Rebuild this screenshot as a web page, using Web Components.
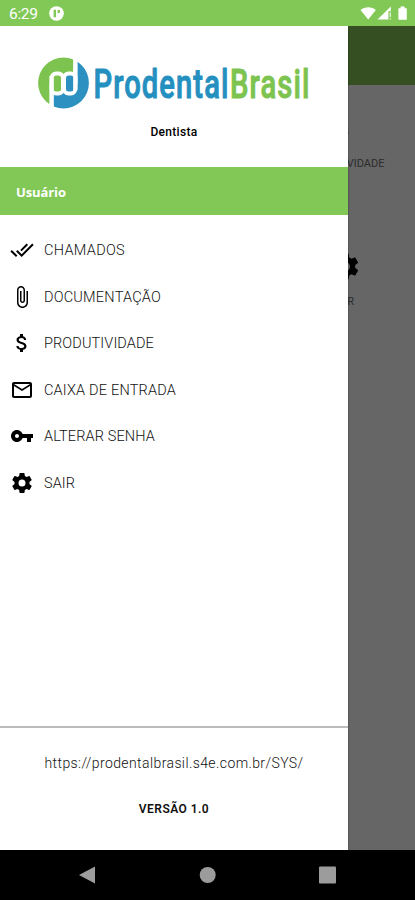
<!DOCTYPE html>
<html lang="pt-BR">
<head>
<meta charset="utf-8">
<title>Prodental Brasil</title>
<style>
  body {
    margin: 0;
    font-family: Roboto, "Liberation Sans", sans-serif;
  }
</style>
</head>
<body>
<app-screen>
  <status-bar slot="status"></status-bar>
  <home-page slot="page">
    <home-tile icon="money">PRODUTIVIDADE</home-tile>
    <home-tile icon="gear">SAIR</home-tile>
  </home-page>
  <side-drawer slot="drawer">
    <brand-logo slot="header"></brand-logo>
    <span slot="role">Dentista</span>
    <span slot="user">Usuário</span>
    <menu-item icon="checks" width="81">CHAMADOS</menu-item>
    <menu-item icon="clip" width="117">DOCUMENTAÇÃO</menu-item>
    <menu-item icon="money" width="110">PRODUTIVIDADE</menu-item>
    <menu-item icon="mail" width="132">CAIXA DE ENTRADA</menu-item>
    <menu-item icon="key" width="111">ALTERAR SENHA</menu-item>
    <menu-item icon="gear" width="31">SAIR</menu-item>
    <span slot="url">https://prodentalbrasil.s4e.com.br/SYS/</span>
    <span slot="version">VERSÃO 1.0</span>
  </side-drawer>
  <nav-bar slot="nav"></nav-bar>
</app-screen>

<script>
const icons = {
  checks: 'M.41 13.41 6 19l1.41-1.42L1.83 12M22.24 5.58 11.66 16.17 7.5 12l-1.43 1.41L11.66 19l12-12M18 7l-1.41-1.42-6.35 6.35 1.42 1.41L18 7z',
  clip: 'M16.5 6v11.5c0 2.21-1.79 4-4 4s-4-1.79-4-4V5c0-1.38 1.12-2.5 2.5-2.5s2.5 1.12 2.5 2.5v10.5c0 .55-.45 1-1 1s-1-.45-1-1V6H10v9.5c0 1.38 1.12 2.5 2.5 2.5s2.5-1.12 2.5-2.5V5c0-2.21-1.79-4-4-4S7 2.79 7 5v12.5c0 3.04 2.46 5.5 5.5 5.5s5.5-2.46 5.5-5.5V6h-1.5z',
  money: 'M11.8 10.9c-2.27-.59-3-1.2-3-2.15 0-1.09 1.01-1.85 2.7-1.85 1.78 0 2.44.85 2.5 2.1h2.21c-.07-1.72-1.12-3.3-3.21-3.81V3h-3v2.16c-1.94.42-3.5 1.68-3.5 3.61 0 2.31 1.91 3.46 4.7 4.13 2.5.6 3 1.48 3 2.41 0 .69-.49 1.79-2.7 1.79-2.06 0-2.87-.92-2.98-2.1h-2.2c.12 2.19 1.76 3.42 3.68 3.83V21h3v-2.15c1.95-.37 3.5-1.5 3.5-3.55 0-2.84-2.43-3.81-4.7-4.4z',
  mail: 'M20 4H4c-1.1 0-2 .9-2 2v12c0 1.1.9 2 2 2h16c1.1 0 2-.9 2-2V6c0-1.1-.9-2-2-2zm0 14H4V8l8 5 8-5v10zm-8-7L4 6h16l-8 5z',
  key: 'M12.65 10C11.83 7.67 9.61 6 7 6c-3.31 0-6 2.69-6 6s2.69 6 6 6c2.61 0 4.83-1.67 5.65-4H17v4h4v-4h2v-4H12.65zM7 14c-1.1 0-2-.9-2-2s.9-2 2-2 2 .9 2 2-.9 2-2 2z',
  gear: 'M12 15.5A3.5 3.5 0 0 1 8.5 12 3.5 3.5 0 0 1 12 8.5a3.5 3.5 0 0 1 3.5 3.5 3.5 3.5 0 0 1-3.5 3.5m7.43-2.53c.04-.32.07-.64.07-.97s-.03-.66-.07-1l2.11-1.63c.19-.15.24-.42.12-.64l-2-3.46c-.12-.22-.39-.31-.61-.22l-2.49 1c-.52-.39-1.06-.73-1.69-.98l-.37-2.65A.506.506 0 0 0 14 2h-4c-.25 0-.46.18-.5.42l-.37 2.65c-.63.25-1.17.59-1.69.98l-2.49-1c-.22-.09-.49 0-.61.22l-2 3.46c-.13.22-.07.49.12.64L4.57 11c-.04.34-.07.67-.07 1s.03.65.07.97l-2.11 1.66c-.19.15-.25.42-.12.64l2 3.46c.12.22.39.3.61.22l2.49-1.01c.52.4 1.06.74 1.69.99l.37 2.65c.04.24.25.42.5.42h4c.25 0 .46-.18.5-.42l.37-2.65c.63-.26 1.17-.59 1.69-.99l2.49 1.01c.22.08.49 0 .61-.22l2-3.46c.12-.22.07-.49-.12-.64l-2.11-1.66z'
};

function define(name, html, setup) {
  const template = document.createElement('template');
  template.innerHTML = html;

  window.customElements.define(name, class extends HTMLElement {
    constructor() {
      super();
      this.attachShadow({mode: 'open'});
      this.shadowRoot.appendChild(template.content.cloneNode(true));
    }

    connectedCallback() {
      if (setup) setup(this, this.shadowRoot);
    }
  });
}

define('app-screen', `
  <style>
    :host {
      display: flex;
      flex-direction: column;
      width: 415px;
      height: 900px;
      overflow: hidden;
    }
    main {
      flex: 1;
      display: flex;
      position: relative;
      overflow: hidden;
    }
    /* the drawer lies over the page */
    .over {
      position: absolute;
      top: 0;
      bottom: 0;
      left: 0;
      display: flex;
    }
  </style>
  <slot name="status"></slot>
  <main>
    <slot name="page"></slot>
    <div class="over"><slot name="drawer"></slot></div>
  </main>
  <slot name="nav"></slot>
`);

define('status-bar', `
  <style>
    :host {
      display: flex;
      align-items: center;
      box-sizing: border-box;
      height: 26px;
      padding: 2px 7px 0 9px;
      background: #82c856;
      color: #fff;
    }
    span {
      font-size: 15.5px;
      letter-spacing: -.3px;
      width: 40px;
    }
    .signs { margin-left: auto; }
    svg { display: block; }
  </style>
  <span>6:29</span>
  <svg width="16" height="16" viewBox="0 0 16 16">
    <circle cx="7.5" cy="7.5" r="7.3" fill="#fff"/>
    <path d="M4.6 3.8v7.4H7V3.800zM8.600 3.900H11v2.400L8.600 7.800z" fill="#82c856"/>
  </svg>
  <svg class="signs" width="48" height="16" viewBox="0 0 48 16">
    <path d="M.5 4C5 .3 11.500 .3 15.900 4L8.200 13.500z" fill="#fff"/>
    <path d="M17.500 13.500 30.800 .6V5.300h-2.400v8.200zM29.700 6.500h1.100v4.500h-1.100zM29.700 12.200h1.100v1.300h-1.100z" fill="#fff"/>
    <path d="M38.400 2.200h2.200V.6h4v1.600h2.200v11.600h-8.400z" fill="#fff"/>
  </svg>
`);

define('home-page', `
  <style>
    :host {
      display: flex;
      flex-direction: column;
      flex: 1;
      background: #666;
    }
    header {
      height: 59px;
      background: #354f22;
    }
    .tiles {
      display: flex;
      flex-direction: column;
      align-items: center;
      gap: 68px;
      width: 140px;
      margin: 28px 0 0 273px;
    }
  </style>
  <header></header>
  <div class="tiles"><slot></slot></div>
`);

define('home-tile', `
  <style>
    :host {
      display: flex;
      flex-direction: column;
      align-items: center;
      gap: 13px;
      height: 70px;
      font-size: 11px;
      line-height: 14px;
      color: #2c2c2c;
    }
    svg { width: 31px; height: 31px; fill: #000; }
    :host([icon="gear"]) { letter-spacing: -.7px; }
    :host([icon="gear"]) svg { margin-left: 4px; }
  </style>
  <svg viewBox="0 0 24 24"><path/></svg>
  <slot></slot>
`, (el, root) => {
  root.querySelector('path').setAttribute('d', icons[el.getAttribute('icon')]);
});

define('side-drawer', `
  <style>
    :host {
      display: flex;
      flex-direction: column;
      width: 348px;
      background: #fff;
      box-shadow: 0 0 2px rgba(0, 0, 0, .4);
    }
    header {
      display: flex;
      flex-direction: column;
      align-items: center;
      height: 141px;
    }
    .role {
      margin-top: 12px;
      font-size: 12px;
      line-height: 16px;
      letter-spacing: .3px;
      font-weight: 500;
    }
    .user {
      display: flex;
      align-items: center;
      box-sizing: border-box;
      height: 47.5px;
      padding: 2px 16px 0;
      background: #82c856;
      color: #fff;
      font: 700 13px "Open Sans", sans-serif;
      letter-spacing: -.1px;
    }
    nav {
      display: flex;
      flex-direction: column;
      flex: 1;
      padding-top: 12.5px;
    }
    footer {
      display: flex;
      flex-direction: column;
      align-items: center;
      box-sizing: border-box;
      height: 124px;
      border-top: 2px solid #bbb;
    }
    .url {
      margin-top: 25px;
      font-size: 14px;
      line-height: 20px;
      font-weight: 300;
      letter-spacing: .4px;
      color: #111;
    }
    .version {
      margin-top: 28px;
      font-size: 12px;
      line-height: 16px;
      font-weight: 600;
      letter-spacing: .45px;
      color: #111;
    }
  </style>
  <header>
    <slot name="header"></slot>
    <div class="role"><slot name="role"></slot></div>
  </header>
  <div class="user"><slot name="user"></slot></div>
  <nav><slot></slot></nav>
  <footer>
    <div class="url"><slot name="url"></slot></div>
    <div class="version"><slot name="version"></slot></div>
  </footer>
`);

define('brand-logo', `
  <style>
    :host { display: block; margin-top: 29px; }
    svg { display: block; overflow: visible; }
    text {
      font-family: Roboto, sans-serif;
      font-size: 41px;
      font-weight: 500;
      letter-spacing: 1.5px;
      stroke-width: 1px;
      stroke-linejoin: round;
    }
  </style>
  <svg width="276" height="57" viewBox="36 55 276 57">
    <clipPath id="disc"><circle cx="63.5" cy="83" r="25.4"/></clipPath>
    <g clip-path="url(#disc)">
      <path d="M36 56h37.300v28H49.600v26H36z" fill="#7dc350"/>
      <path d="M77.400 56H90v54H53.600V84h23.800z" fill="#2c91c1"/>
    </g>
    <rect x="51.6" y="73.6" width="11.4" height="19.8" rx="4.5" fill="#7dc350" stroke="#fff" stroke-width="4"/>
    <rect x="64" y="73.6" width="11.4" height="19.8" rx="4.5" fill="#2c91c1" stroke="#fff" stroke-width="4"/>
    <path d="M51.600 76v34M75.400 56v34" stroke="#fff" stroke-width="4"/>
    <text data-x="93.5" data-width="136" fill="#2490c0" stroke="#2490c0">Prodental</text>
    <text data-x="230" data-width="80.5" fill="#7dc350" stroke="#7dc350">Brasil</text>
  </svg>
`, (el, root) => {
  // condense each word to its width
  root.querySelectorAll('text').forEach(word => {
    const scale = word.dataset.width / word.getComputedTextLength();
    word.setAttribute('transform', `translate(${word.dataset.x} 97.7) scale(${scale} 1)`);
  });
});

define('menu-item', `
  <style>
    :host {
      display: flex;
      align-items: center;
      gap: 10px;
      height: 46.5px;
      padding-left: 10px;
      font-size: 14.5px;
      font-weight: 300;
      color: #111;
    }
    svg { width: 24px; height: 24px; fill: #000; }
    span { white-space: nowrap; padding-top: 1px; }
  </style>
  <svg viewBox="0 0 24 24"><path/></svg>
  <span><slot></slot></span>
`, (el, root) => {
  root.querySelector('path').setAttribute('d', icons[el.getAttribute('icon')]);

  // spread the label over its width
  const label = root.querySelector('span');
  const free = el.getAttribute('width') - label.getBoundingClientRect().width;
  label.style.letterSpacing = free / el.textContent.length + 'px';
});

define('nav-bar', `
  <style>
    :host {
      display: flex;
      align-items: center;
      justify-content: center;
      gap: 102px;
      height: 50px;
      background: #000;
    }
    svg { width: 18px; height: 18px; fill: #9c9c9c; }
  </style>
  <svg viewBox="0 0 18 18"><path d="M16 .5v17L0 9z"/></svg>
  <svg viewBox="0 0 18 18"><circle cx="8.7" cy="9" r="8"/></svg>
  <svg viewBox="0 0 18 18"><rect x="0" y=".5" width="17" height="17" rx="1"/></svg>
`);
</script>
</body>
</html>
